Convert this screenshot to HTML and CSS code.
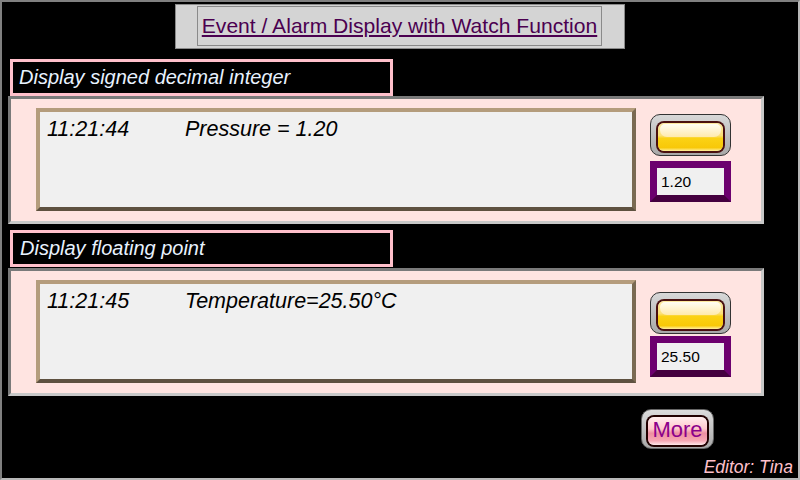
FILE: index.html
```html
<!DOCTYPE html>
<html lang="en">
<head>
<meta charset="utf-8">
<title>Event / Alarm Display with Watch Function</title>
<link rel="stylesheet" href="styles.css">
</head>
<body>
<main class="screen">
  <header class="title-box"><h1 class="title">Event / Alarm Display with Watch Function</h1></header>

  <div class="label label-first">Display signed decimal integer</div>
  <section class="panel">
    <div class="log"><span class="time">11:21:44</span><span>Pressure = 1.20</span></div>
    <div class="side side-first">
      <div class="lamp"><div class="lamp-face"></div></div>
      <div class="value">1.20</div>
    </div>
  </section>

  <div class="label label-second">Display floating point</div>
  <section class="panel">
    <div class="log"><span class="time">11:21:45</span><span>Temperature=25.50°C</span></div>
    <div class="side side-second">
      <div class="lamp"><div class="lamp-face"></div></div>
      <div class="value value-second">25.50</div>
    </div>
  </section>

  <div class="footer">
    <button class="more" type="button"><span class="more-face">More</span></button>
    <div class="editor">Editor: Tina</div>
  </div>
</main>
</body>
</html>
```
FILE: styles.css
```css
* { box-sizing: border-box; }
html, body { margin: 0; padding: 0; background: #000; }
body { width: 800px; height: 480px; overflow: hidden; font-family: "Liberation Sans", Arial, sans-serif; }

.screen {
  width: 800px; height: 480px; background: #000;
  border: 2px solid; border-color: #808080 #b8b8b8 #b8b8b8 #808080;
  padding: 2px 0 0 6px;
  display: flex; flex-direction: column; align-items: flex-start;
}

.title-box {
  width: 450px; height: 45px; margin-left: 167px;
  background: #d4d4d4; border: 1px solid #8a8a8a;
  padding: 1px 0 0 21px;
}
.title {
  width: 405px; height: 40px; margin: 0;
  border: 1px solid #8a8a8a;
  font-size: 21.1px; font-weight: 400; line-height: 38px; text-align: center;
  color: #4b0050; text-decoration: underline; white-space: nowrap;
}

.label {
  width: 383px; height: 37px; margin-left: 2px;
  border: 3px solid #ffc0cb; background: #000;
  color: #e8f2ff; font-size: 20px; font-style: italic; line-height: 31px; padding-left: 6px;
}
.label-first { margin-top: 10px; }
.label-second { margin-top: 6px; padding-left: 7px; }

.panel {
  width: 756px; height: 128px; flex: none;
  background: #ffe4e1;
  border: 3px solid; border-color: #7a7a7a #c8c8c8 #c8c8c8 #7a7a7a;
  padding: 9px 0 0 25px;
  display: flex; align-items: flex-start;
}
.label-second + .panel { margin-top: 1px; }

.log {
  width: 600px; height: 103px; flex: none;
  background: #f0f0f0;
  border: 4px solid; border-color: #b49c7c #7a6a52 #5e5140 #b49c7c;
  padding: 4px 0 0 7px;
  font-size: 21.5px; font-style: italic; color: #000; line-height: 27px;
  display: flex;
}
.time { width: 138px; flex: none; }

.side { margin-left: 14px; width: 82px; display: flex; flex-direction: column; }
.side-first { padding-top: 6px; }
.side-second { padding-top: 12px; }

.lamp {
  width: 81px; height: 42px; padding: 8px 7px 4px;
  border-radius: 10px;
  background: linear-gradient(#d8d8d8, #a8a8a8);
  border: 1px solid #333;
}
.lamp-face {
  position: relative; height: 100%;
  border-radius: 6px;
  background: linear-gradient(#fde9a0 0%, #fbe078 45%, #fbd214 55%, #f8c808 88%, #fff0a0 100%);
  box-shadow: 0 0 0 2px #4a1010;
}
.lamp-face::before {
  content: ""; position: absolute; left: 2px; right: 2px; top: 1px; height: 46%;
  border-radius: 5px 5px 7px 7px;
  background: linear-gradient(#fffdf4, #ffeaad);
}

.value {
  width: 81px; height: 41px; margin-top: 5px;
  background: #f0f0f0;
  border: 7px solid; border-color: #6c006e #6c006e #45003f #6c006e;
  font-size: 15.5px; line-height: 27px; padding-left: 4px; color: #000;
}
.value-second { margin-top: 2px; }

.footer { width: 792px; flex: 1; display: flex; flex-direction: column; align-items: flex-end; }

.more {
  width: 73px; height: 40px; margin: 13px 86px 0 0; padding: 7px 6px 3px;
  border-radius: 10px; border: 1px solid #666;
  background: linear-gradient(#dcdcdc, #a8a8a8);
  display: block;
  font-family: inherit;
}
.more-face {
  display: block; height: 100%;
  border-radius: 6px; box-shadow: 0 0 0 2px #200;
  background: linear-gradient(#ffeeee 0%, #ffc8cc 42%, #ee8fa0 58%, #f7a8b4 85%, #ffe8ea 100%);
  color: #8b008b; font-size: 22px; line-height: 26px; text-align: center; white-space: nowrap;
}

.editor {
  margin: 9px 7px 0 0; color: #ffc0cb; font-size: 17.5px; font-style: italic; line-height: 18px;
}
```
